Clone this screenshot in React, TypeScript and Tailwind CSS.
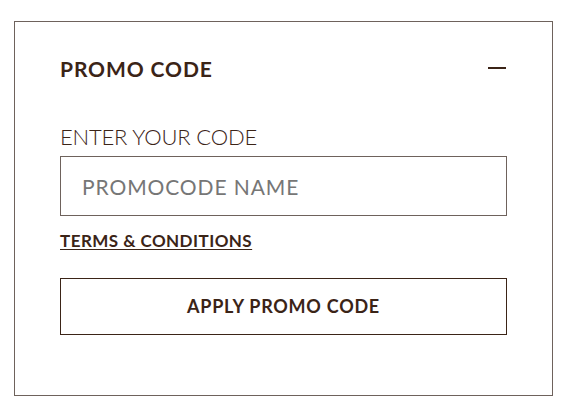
export default function App() {
  return (
    <div className="w-[569px] h-[413px] bg-white pt-[21px] pl-[14px]" style={{ fontFamily: "Lato, 'Open Sans', sans-serif" }}>
      <div className="w-[539px] h-[375px] border border-[#6e625c] px-[45px] pt-[32px] text-[#3b2417]">
        {/* header */}
        <div className="flex items-center justify-between h-[28px]">
          <h2 className="text-[21px] font-bold tracking-[0.9px] leading-none">PROMO CODE</h2>
          <span className="block w-[18px] h-[2px] bg-[#3b2417] mr-[1px] mb-[1px]" />
        </div>

        <label className="block mt-[44px] text-[22px] font-light leading-none tracking-[-0.2px]">ENTER YOUR CODE</label>
        <input
          type="text"
          placeholder="PROMOCODE NAME"
          className="mt-[8px] block w-full h-[60px] border border-[#6e625c] px-[21px] text-[21px] tracking-[0.9px] placeholder:text-[#767676] outline-none"
          style={{ fontFamily: "Lato, 'Open Sans', sans-serif" }}
        />

        <a href="#" className="inline-block mt-[16px] text-[17px] font-bold underline underline-offset-2 leading-none tracking-[0.45px]">
          TERMS &amp; CONDITIONS
        </a>

        <button className="mt-[25px] block w-full h-[57px] border border-[#3b2417] text-[18px] font-bold tracking-[0.75px]">
          APPLY PROMO CODE
        </button>
      </div>
    </div>
  );
}
